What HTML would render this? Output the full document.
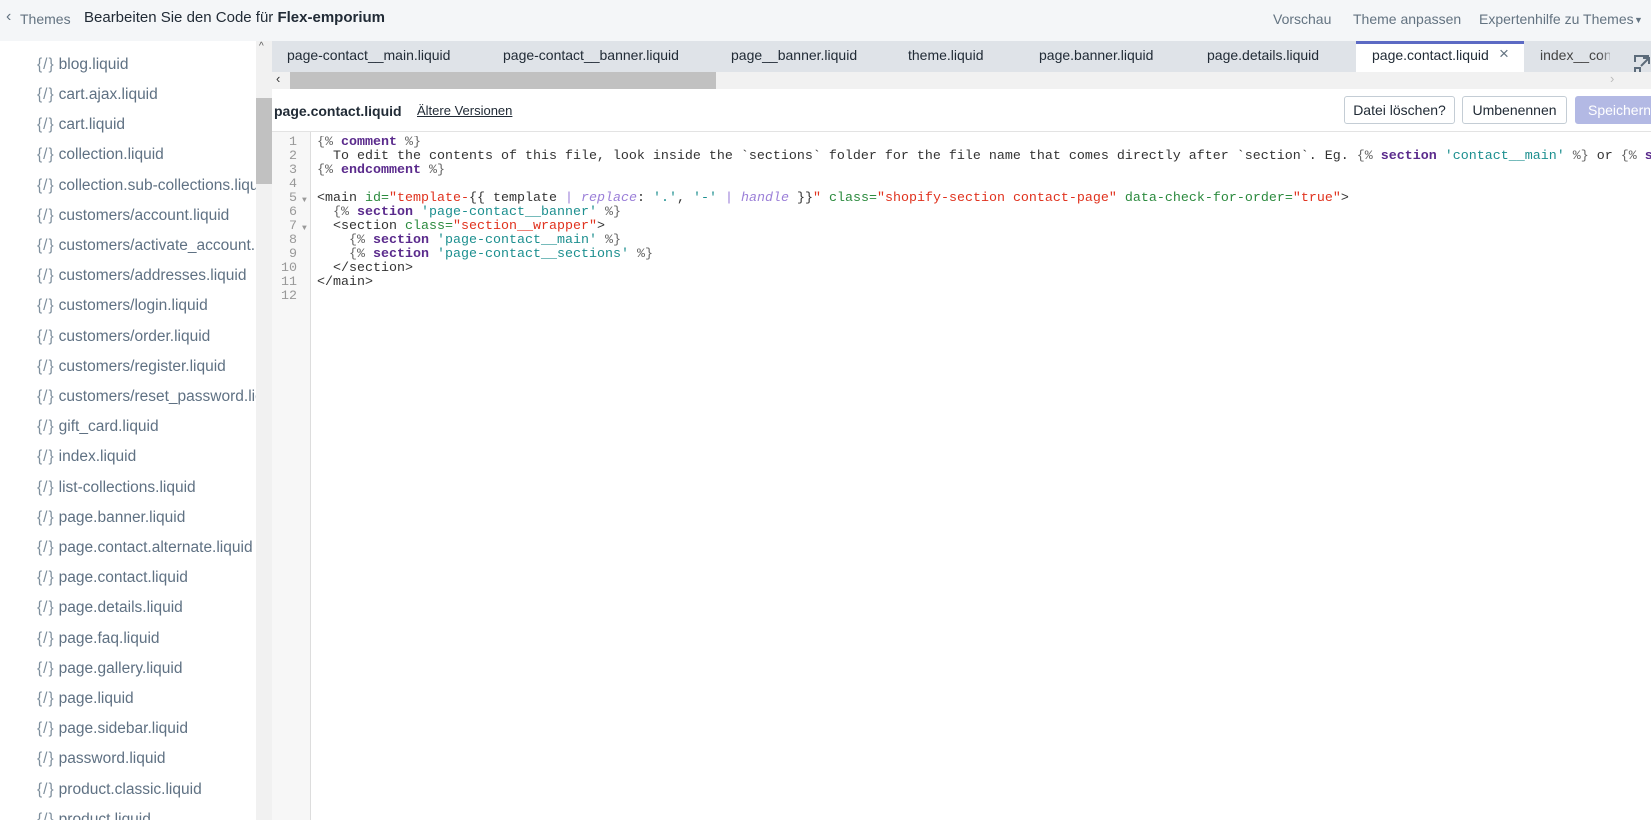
<!DOCTYPE html>
<html><head><meta charset="utf-8"><style>
*{margin:0;padding:0;box-sizing:border-box}
html,body{width:1651px;height:820px;overflow:hidden}
body{background:#fff;font-family:"Liberation Sans",sans-serif;position:relative}
.hdr{position:absolute;left:0;top:0;width:1651px;height:41px;background:#f4f6f8;overflow:hidden}
.hdr span{position:absolute;top:11px;font-size:14px;color:#637381;white-space:nowrap}
.side{position:absolute;left:0;top:41px;width:256px;height:779px;overflow:hidden;background:#fff}
.it{position:absolute;left:37px;font-size:15.5px;color:#5f7183;white-space:nowrap;margin-top:5px}
.it b{font-weight:normal;color:#7d8e9c;letter-spacing:1px;margin-right:4px}
.sb{position:absolute;left:256px;top:41px;width:16px;height:779px;background:#f1f1f1}
.thumb{position:absolute;left:256px;top:98px;width:16px;height:86px;background:#c1c1c1}
.tabs{position:absolute;left:272px;top:41px;width:1379px;height:31px;background:#dfe3e8}
.tab{position:absolute;top:6px;font-size:14px;color:#212b36;white-space:nowrap}
.active{position:absolute;left:1356px;top:41px;width:168px;height:31px;background:#fff;border-top:3px solid #5c6ac4}
.hs{position:absolute;left:272px;top:72px;width:1379px;height:17px;background:#f1f1f1}
.hthumb{position:absolute;left:290px;top:72px;width:426px;height:17px;background:#c1c1c1}
.tool{position:absolute;left:272px;top:89px;width:1379px;height:43px;background:#fff;border-bottom:1px solid #e3e3e3}
.btn{position:absolute;top:96px;height:28px;border:1px solid #c4cdd5;border-radius:3px;background:#fff;font-size:14px;color:#212b36;text-align:center;line-height:26px;overflow:hidden;white-space:nowrap}
.gut{position:absolute;left:272px;top:132px;width:39px;height:688px;background:#f7f7f7;border-right:1px solid #ddd}
.code{position:absolute;left:272px;top:136px;width:1379px;height:200px;overflow:hidden;font-family:"Liberation Mono",monospace;font-size:13.33px;line-height:14px;white-space:pre}
.ln{position:absolute;left:0;width:25px;text-align:right;color:#999}
.fd{position:absolute;left:30px;color:#999;font-size:8px}
.cl{position:absolute;left:45px;color:#333}
.k{color:#5a2a8c;font-weight:bold}.t{color:#666}.s{color:#e0321e}.q{color:#1c8f8f}.a{color:#2b8a3e}.f{color:#9b7fd8;font-style:italic}
</style></head><body>
<div class="hdr">
<span style="left:6px;color:#637381;font-size:16px;top:8px">‹</span>
<span style="left:20px">Themes</span>
<span style="left:84px;color:#212b36;font-size:15px;top:9px">Bearbeiten Sie den Code für <b style="font-weight:bold">Flex-emporium</b></span>
<span style="left:1273px">Vorschau</span>
<span style="left:1353px">Theme anpassen</span>
<span style="left:1479px">Expertenhilfe zu Themes</span>
<span style="left:1634px;font-size:9px;top:15px">▼</span>
</div>
<div class="side">
<div class="it" style="top:10px"><b>{/}</b>blog.liquid</div>
<div class="it" style="top:40px"><b>{/}</b>cart.ajax.liquid</div>
<div class="it" style="top:70px"><b>{/}</b>cart.liquid</div>
<div class="it" style="top:100px"><b>{/}</b>collection.liquid</div>
<div class="it" style="top:131px"><b>{/}</b>collection.sub-collections.liquid</div>
<div class="it" style="top:161px"><b>{/}</b>customers/account.liquid</div>
<div class="it" style="top:191px"><b>{/}</b>customers/activate_account.liquid</div>
<div class="it" style="top:221px"><b>{/}</b>customers/addresses.liquid</div>
<div class="it" style="top:251px"><b>{/}</b>customers/login.liquid</div>
<div class="it" style="top:282px"><b>{/}</b>customers/order.liquid</div>
<div class="it" style="top:312px"><b>{/}</b>customers/register.liquid</div>
<div class="it" style="top:342px"><b>{/}</b>customers/reset_password.liquid</div>
<div class="it" style="top:372px"><b>{/}</b>gift_card.liquid</div>
<div class="it" style="top:402px"><b>{/}</b>index.liquid</div>
<div class="it" style="top:433px"><b>{/}</b>list-collections.liquid</div>
<div class="it" style="top:463px"><b>{/}</b>page.banner.liquid</div>
<div class="it" style="top:493px"><b>{/}</b>page.contact.alternate.liquid</div>
<div class="it" style="top:523px"><b>{/}</b>page.contact.liquid</div>
<div class="it" style="top:553px"><b>{/}</b>page.details.liquid</div>
<div class="it" style="top:584px"><b>{/}</b>page.faq.liquid</div>
<div class="it" style="top:614px"><b>{/}</b>page.gallery.liquid</div>
<div class="it" style="top:644px"><b>{/}</b>page.liquid</div>
<div class="it" style="top:674px"><b>{/}</b>page.sidebar.liquid</div>
<div class="it" style="top:704px"><b>{/}</b>password.liquid</div>
<div class="it" style="top:735px"><b>{/}</b>product.classic.liquid</div>
<div class="it" style="top:765px"><b>{/}</b>product.liquid</div>
</div>
<div class="sb"></div><div class="thumb"></div>
<div style="position:absolute;left:259px;top:41px;font-size:10px;color:#555">^</div>
<div class="tabs"></div>
<div class="active"></div>
<div class="tab" style="left:287px;top:47px">page-contact__main.liquid</div>
<div class="tab" style="left:503px;top:47px">page-contact__banner.liquid</div>
<div class="tab" style="left:731px;top:47px">page__banner.liquid</div>
<div class="tab" style="left:908px;top:47px">theme.liquid</div>
<div class="tab" style="left:1039px;top:47px">page.banner.liquid</div>
<div class="tab" style="left:1207px;top:47px">page.details.liquid</div>
<div class="tab" style="left:1372px;top:47px">page.contact.liquid</div>
<div class="tab" style="left:1499px;top:44px;font-size:17px;color:#637381">×</div>
<div class="tab" style="left:1540px;top:47px;width:70px;overflow:hidden;color:#444">index__conte</div>
<div style="position:absolute;left:1600px;top:41px;width:51px;height:31px;background:linear-gradient(90deg,rgba(223,227,232,0),#dfe3e8 30%)"></div>
<svg style="position:absolute;left:1634px;top:55px" width="17" height="20" viewBox="0 0 17 20"><path d="M1 7V1h14" fill="none" stroke="#5c6b7a" stroke-width="2"/><rect x="1" y="13" width="5" height="5" fill="none" stroke="#5c6b7a" stroke-width="2"/><path d="M7 11l7-7M9 3h6v6" fill="none" stroke="#5c6b7a" stroke-width="2"/></svg>
<div class="hs"></div><div class="hthumb"></div>
<div style="position:absolute;left:276px;top:71px;font-size:13px;color:#333">‹</div>
<div style="position:absolute;left:1610px;top:71px;font-size:13px;color:#bbb">›</div>
<div class="tool"></div>
<div style="position:absolute;left:274px;top:103px;font-size:14px;color:#212b36;font-weight:bold">page.contact.liquid</div>
<div style="position:absolute;left:417px;top:103px;font-size:13px;color:#212b36;text-decoration:underline">Ältere Versionen</div>
<div class="btn" style="left:1344px;width:111px">Datei löschen?</div>
<div class="btn" style="left:1462px;width:105px">Umbenennen</div>
<div class="btn" style="left:1575px;width:76px;background:#b3b9e4;border-color:#b3b9e4;color:#fff;text-align:left;padding-left:12px;border-radius:3px 0 0 3px">Speichern</div>
<div class="gut"></div>
<div class="code">
<div class="ln" style="top:0">1</div><div class="cl" style="top:0"><span class="t">{%</span> <span class="k">comment</span> <span class="t">%}</span></div>
<div class="ln" style="top:14px">2</div><div class="cl" style="top:14px">  To edit the contents of this file, look inside the `sections` folder for the file name that comes directly after `section`. Eg. <span class="t">{%</span> <span class="k">section</span> <span class="q">'contact__main'</span> <span class="t">%}</span> or <span class="t">{%</span> <span class="k">section</span></div>
<div class="ln" style="top:28px">3</div><div class="cl" style="top:28px"><span class="t">{%</span> <span class="k">endcomment</span> <span class="t">%}</span></div>
<div class="ln" style="top:42px">4</div>
<div class="ln" style="top:56px">5</div><div class="fd" style="top:58px">▼</div><div class="cl" style="top:56px">&lt;main <span class="a">id=</span><span class="s">"template-</span>{{ template <span class="f" style="font-style:normal">|</span> <span class="f">replace</span>: <span class="q">'.'</span>, <span class="q">'-'</span> <span class="f" style="font-style:normal">|</span> <span class="f">handle</span> }}<span class="s">"</span> <span class="a">class=</span><span class="s">"shopify-section contact-page"</span> <span class="a">data-check-for-order=</span><span class="s">"true"</span>&gt;</div>
<div class="ln" style="top:70px">6</div><div class="cl" style="top:70px">  <span class="t">{%</span> <span class="k">section</span> <span class="q">'page-contact__banner'</span> <span class="t">%}</span></div>
<div class="ln" style="top:84px">7</div><div class="fd" style="top:86px">▼</div><div class="cl" style="top:84px">  &lt;section <span class="a">class=</span><span class="s">"section__wrapper"</span>&gt;</div>
<div class="ln" style="top:98px">8</div><div class="cl" style="top:98px">    <span class="t">{%</span> <span class="k">section</span> <span class="q">'page-contact__main'</span> <span class="t">%}</span></div>
<div class="ln" style="top:112px">9</div><div class="cl" style="top:112px">    <span class="t">{%</span> <span class="k">section</span> <span class="q">'page-contact__sections'</span> <span class="t">%}</span></div>
<div class="ln" style="top:126px">10</div><div class="cl" style="top:126px">  &lt;/section&gt;</div>
<div class="ln" style="top:140px">11</div><div class="cl" style="top:140px">&lt;/main&gt;</div>
<div class="ln" style="top:154px">12</div>
</div>
</body></html>
